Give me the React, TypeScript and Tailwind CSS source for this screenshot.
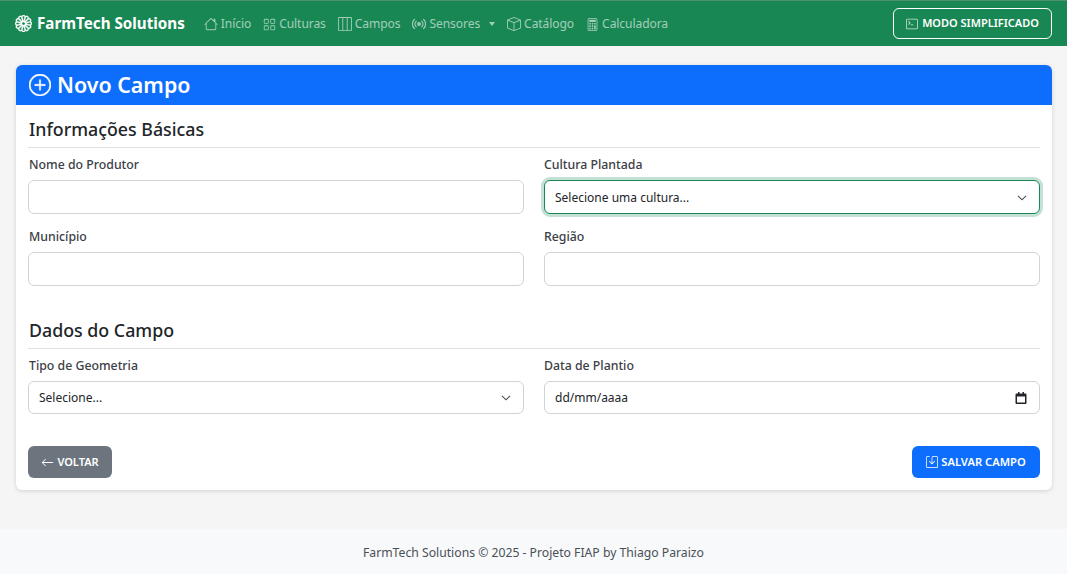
import type { ReactNode } from "react";
import {
  BsArrowLeft,
  BsBox,
  BsBroadcast,
  BsCalculator,
  BsChevronDown,
  BsFlower1,
  BsGrid,
  BsHouse,
  BsLayoutThreeColumns,
  BsPlusCircle,
  BsSave,
  BsTerminal,
} from "react-icons/bs";

const NavLink = ({ icon, label, caret }: { icon: ReactNode; label: string; caret?: boolean }) => (
  <a className="flex items-center gap-[3px] text-[12.1px] tracking-[-0.1px] text-white/60">
    {icon}
    <span>{label}</span>
    {caret && <span className="ml-[6px] h-0 w-0 border-x-[3.5px] border-t-[4px] border-x-transparent border-t-white/60" />}
  </a>
);

const Field = ({ label, children }: { label: string; children: ReactNode }) => (
  <div className="flex flex-col odd:indent-[1px]">
    <label className="mb-[5px] h-[21px] text-[12.3px] font-medium leading-[21px] text-[#3b4046]">{label}</label>
    {children}
  </div>
);

const TextBox = () => <div className="h-[34px] rounded-[6px] border border-[#ced4da] bg-white" />;

const SelectBox = ({ value, focused }: { value: string; focused?: boolean }) => (
  <div
    className={
      focused
        ? "flex h-[34px] items-center justify-between rounded-[6px] border border-[#198754] bg-white pl-[10px] pr-[12px] pt-[1px] indent-0 text-[12px] text-[#212529] shadow-[0_0_0_3px_rgba(25,135,84,0.25)]"
        : "flex h-[33px] items-center justify-between rounded-[6px] border border-[#ced4da] bg-white pl-[10px] pr-[12px] pt-[1px] indent-0 text-[12px] text-[#212529]"
    }
  >
    <span>{value}</span>
    <BsChevronDown className="size-[10px] stroke-[0.6px]" />
  </div>
);

const App = () => (
  <div className="flex h-[574px] flex-col overflow-hidden bg-[#f5f5f5] font-['Noto_Sans',sans-serif]">
    <nav className="flex h-[46px] items-center justify-between border-t border-t-[#4f8f70] bg-[#198754] px-[15px]">
      <div className="flex items-center">
        <a className="mr-[19px] flex items-center gap-[5px] text-[15.2px] font-bold text-white">
          <BsFlower1 className="size-[17px] stroke-[0.4px]" />
          FarmTech Solutions
        </a>
        <div className="flex items-center gap-[12px] pt-[2px]">
          <NavLink icon={<BsHouse className="size-[14px]" />} label="Início" />
          <NavLink icon={<BsGrid className="size-[13px]" />} label="Culturas" />
          <NavLink icon={<BsLayoutThreeColumns className="size-[14px]" />} label="Campos" />
          <NavLink icon={<BsBroadcast className="size-[14px] stroke-[0.3px]" />} label="Sensores" caret />
          <NavLink icon={<BsBox className="size-[14px]" />} label="Catálogo" />
          <NavLink icon={<BsCalculator className="size-[13px]" />} label="Calculadora" />
        </div>
      </div>
      <button className="flex h-[31px] w-[159px] items-center justify-center gap-[4px] rounded-[6px] border border-white text-[11px] font-semibold text-white">
        <BsTerminal className="size-[12px] text-white/80" />
        MODO SIMPLIFICADO
      </button>
    </nav>

    <main className="flex-1 pl-[16px] pr-[15px] pt-[19px]">
      <div className="overflow-hidden rounded-[6px] bg-white shadow-[0_1px_4px_rgba(0,0,0,0.15)]">
        <div className="flex h-[40px] items-center gap-[6px] bg-[#0d6efd] px-[13px] text-[21.4px] font-semibold text-white">
          <BsPlusCircle className="size-[22px] stroke-[0.3px]" />
          Novo Campo
        </div>
        <div className="p-[12px]">
          <h2 className="h-[31px] border-b border-[#dee2e6] indent-[1px] text-[17.8px] font-medium leading-[25px] text-[#212529]">
            Informações Básicas
          </h2>
          <div className="mt-[6px] grid grid-cols-2 gap-x-[20px] gap-y-[12px]">
            <Field label="Nome do Produtor"><TextBox /></Field>
            <Field label="Cultura Plantada"><SelectBox value="Selecione uma cultura..." focused /></Field>
            <Field label="Município"><TextBox /></Field>
            <Field label="Região"><TextBox /></Field>
          </div>
          <h2 className="mt-[31px] h-[32px] border-b border-[#dee2e6] indent-[1px] text-[17.8px] font-medium leading-[27px] text-[#212529]">
            Dados do Campo
          </h2>
          <div className="mt-[6px] grid grid-cols-2 gap-x-[20px]">
            <Field label="Tipo de Geometria"><SelectBox value="Selecione..." /></Field>
            <Field label="Data de Plantio">
              <div className="flex h-[33px] items-center justify-between rounded-[6px] border border-[#ced4da] bg-white pl-[10px] pr-[12px] pt-[1px] text-[12px] text-[#212529]">
                <span>dd/mm/aaaa</span>
                <svg viewBox="0 0 12 12" className="size-[12px]" fill="#212529">
                  <path d="M3 0h1.500v1.500h3V0H9v1.500h1.500a1 1 0 0 1 1 1v8.500a1 1 0 0 1-1 1h-9a1 1 0 0 1-1-1V2.500a1 1 0 0 1 1-1H3V0zM2 4.500v6h8v-6H2z" />
                </svg>
              </div>
            </Field>
          </div>
          <div className="mt-[32px] flex justify-between">
            <button className="flex h-[32px] w-[84px] items-center justify-center gap-[3px] rounded-[6px] bg-[#6c757d] text-[11px] font-semibold text-white">
              <BsArrowLeft className="size-[13px]" />
              VOLTAR
            </button>
            <button className="flex h-[32px] w-[128px] items-center justify-center gap-[3px] rounded-[6px] bg-[#0d6efd] text-[11.2px] font-semibold text-white">
              <BsSave className="size-[12px]" />
              SALVAR CAMPO
            </button>
          </div>
        </div>
      </div>
    </main>

    <footer className="flex h-[45px] items-center justify-center bg-[#f8f9fa] pt-[4px] text-[12.2px] text-[#495057]">
      FarmTech Solutions © 2025 - Projeto FIAP by Thiago Paraizo
    </footer>
  </div>
);

export default App;
